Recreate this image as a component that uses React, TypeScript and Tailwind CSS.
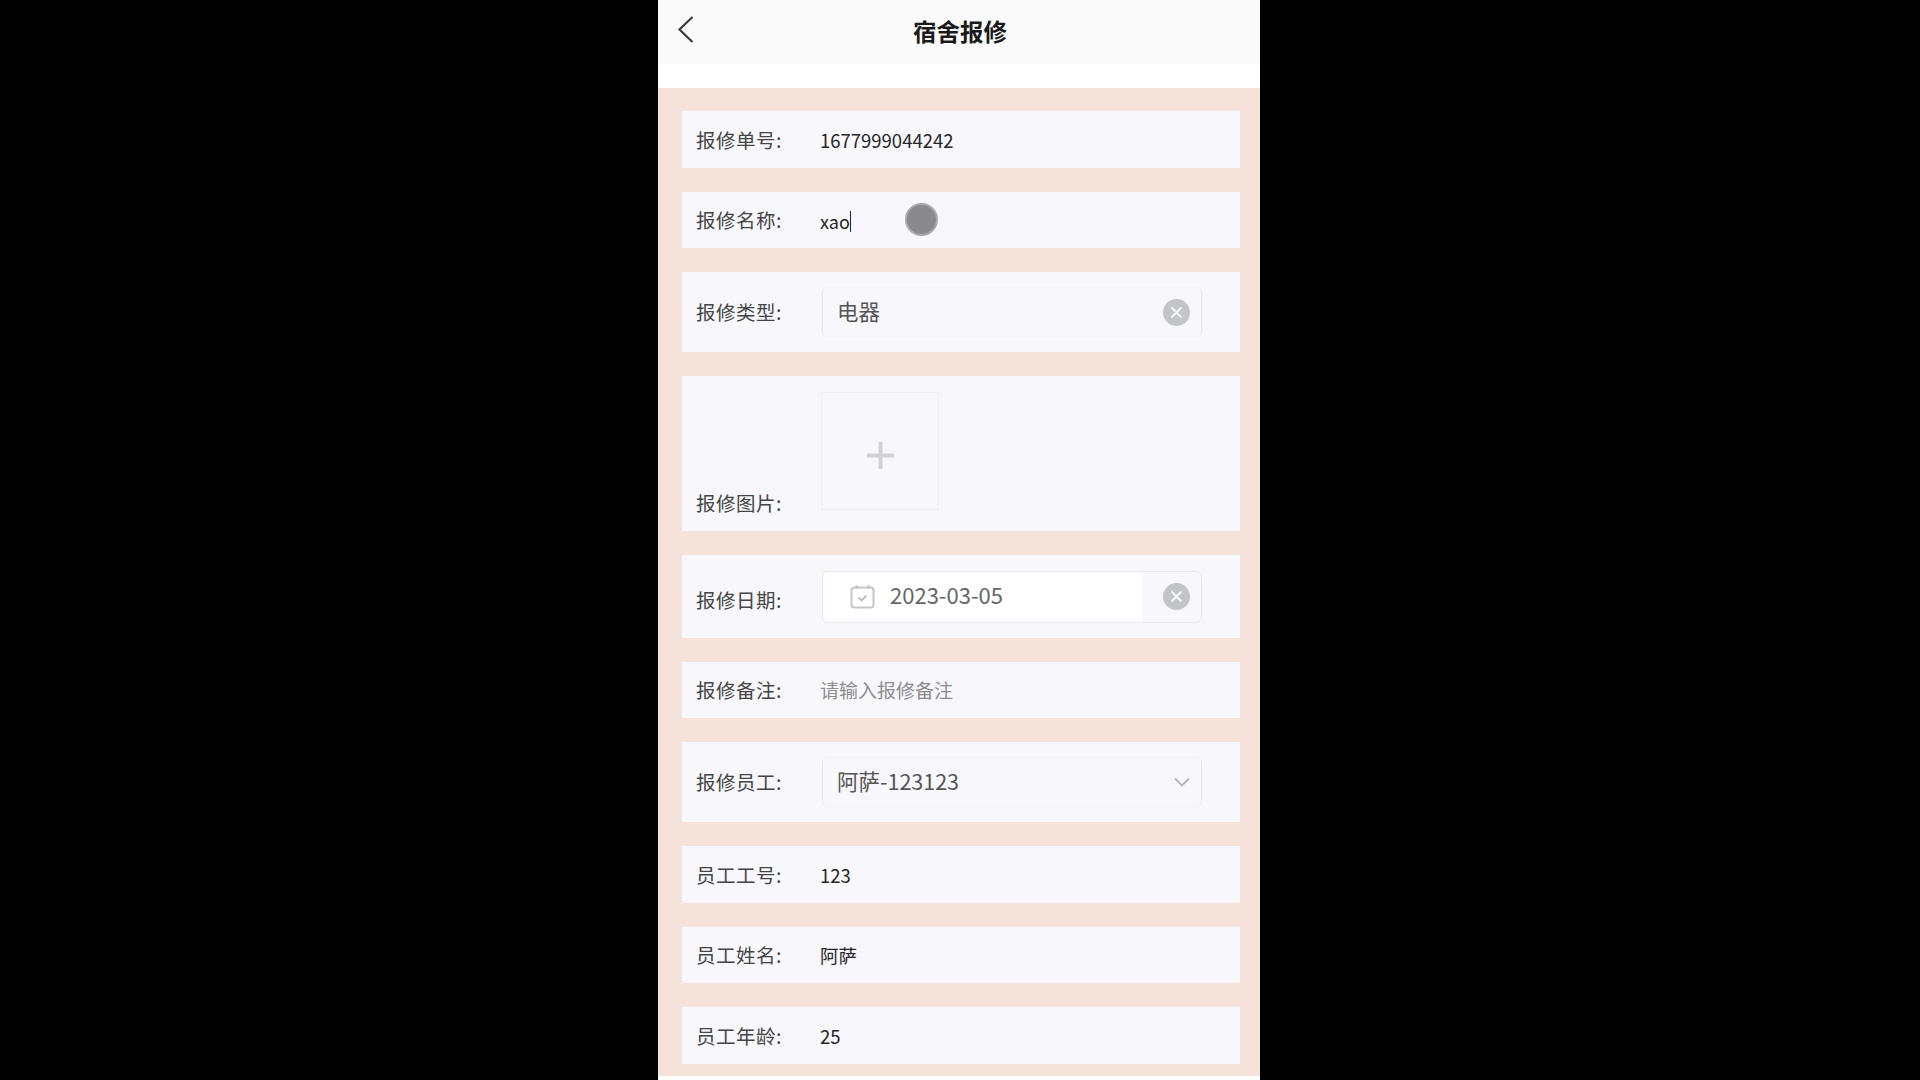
import React from "react";

const font = "[font-family:'Noto_Sans_CJK_SC','Noto_Sans',sans-serif]";

const Row: React.FC<{ label: string; h: string; children?: React.ReactNode; labelClass?: string }> = ({
  label,
  h,
  children,
  labelClass = "",
}) => {
  return (
    <div className={`flex items-center bg-[#f7f7fc] pl-[14px] ${h}`}>
      <span className={`w-[124px] shrink-0 text-[19.5px] leading-[26px] tracking-[0.5px] text-[#454545] ${labelClass}`}>
        {label}
      </span>
      {children}
    </div>
  );
};

const Value: React.FC<{ text: string }> = ({ text }) => {
  return <span className="text-[18.5px] leading-[26px] text-[#262626]">{text}</span>;
};

const ClearIcon = () => {
  return (
    <svg width="27" height="27" viewBox="0 0 27 27" className="shrink-0">
      <circle cx="13.5" cy="13.5" r="13.5" fill="#c2c4ca" />
      <path d="M9 9l9 9M18 9l-9 9" stroke="#f7f7fc" strokeWidth="2" strokeLinecap="round" />
    </svg>
  );
};

const Select: React.FC<{ text: string; children: React.ReactNode }> = ({ text, children }) => {
  return (
    <div className="ml-[2px] flex h-[50px] w-[380px] items-center justify-between rounded-md border border-x-[#e6e6ec] border-y-[#f3f3f8] pl-[14px] pr-[11px]">
      <span className="pb-[2px] text-[21.5px] text-[#555555]">{text}</span>
      {children}
    </div>
  );
};

export default function App() {
  return (
    <div className={`h-[1080px] overflow-hidden bg-black ${font}`}>
      <div className="ml-[658px] h-full w-[602px] bg-white">
        <header className="relative flex h-[64px] items-center justify-center bg-[#fafafa]">
          <svg width="18" height="27" viewBox="0 0 18 27" fill="none" className="absolute left-[19px] top-[16px]">
            <path d="M15.5 1L2.5 13.5l13 12.5" stroke="#3c3c3c" strokeWidth="2.2" />
          </svg>
          <h1 className="ml-[2px] text-[23.5px] font-bold text-[#1a1a1a]">宿舍报修</h1>
        </header>
        <main className="mt-[24px] flex h-[988px] flex-col gap-[24px] bg-[#f5e2da] pl-[24px] pr-[20px] pt-[23px]">
          <Row label="报修单号:" h="h-[57px]">
            <Value text="1677999044242" />
          </Row>
          <Row label="报修名称:" h="h-[56px] relative">
            <span className="mt-[2px] border-r border-[#222222] text-[18px] leading-[21px] text-[#262626]">xao</span>
            <span className="absolute left-[223px] top-[11px] h-[33px] w-[33px] rounded-full border-2 border-[#a9a9ad] bg-[#8a8a8e]" />
          </Row>
          <Row label="报修类型:" h="h-[80px]">
            <Select text="电器">
              <ClearIcon />
            </Select>
          </Row>
          <div className="flex h-[155px] items-start bg-[#f7f7fc] pl-[14px] pt-[16px]">
            <span className="mt-[98px] w-[125px] shrink-0 text-[19.5px] leading-[26px] tracking-[0.5px] text-[#454545]">
              报修图片:
            </span>
            <div className="flex h-[118px] w-[118px] items-center justify-center border border-[#efeff3]">
              <svg width="27" height="27" viewBox="0 0 27 27" className="mt-[8px]">
                <path d="M13.5 0v27M0 13.5h27" stroke="#d2d2d6" strokeWidth="4" />
              </svg>
            </div>
          </div>
          <Row label="报修日期:" h="h-[83px]" labelClass="mt-[7px]">
            <div className="ml-[2px] flex h-[52px] w-[380px] items-center justify-between rounded-md border border-[#e8e8ee] pr-[11px]">
              <div className="flex h-full w-[319px] items-center gap-[15px] rounded-l-md bg-white pl-[27px]">
                <svg width="25" height="25" viewBox="0 0 25 25" fill="none" stroke="#c4c6cb" strokeWidth="2">
                  <rect x="1.5" y="3.5" width="22" height="20" rx="3" />
                  <path d="M6.5 1v4M18.5 1v4" />
                  <path d="M8.5 13.5l3 3 5-5" strokeWidth="1.5" stroke="#a8aab0" />
                </svg>
                <span className="pb-[4px] text-[22px] text-[#666666]">2023-03-05</span>
              </div>
              <ClearIcon />
            </div>
          </Row>
          <Row label="报修备注:" h="h-[56px]">
            <span className="text-[19px] leading-[26px] text-[#8c8c8c]">请输入报修备注</span>
          </Row>
          <Row label="报修员工:" h="h-[80px]">
            <Select text="阿萨-123123">
              <svg width="16" height="10" viewBox="0 0 16 10" fill="none">
                <path d="M1 1.5l7 7 7-7" stroke="#b4b6bc" strokeWidth="1.8" />
              </svg>
            </Select>
          </Row>
          <Row label="员工工号:" h="h-[57px]">
            <Value text="123" />
          </Row>
          <Row label="员工姓名:" h="h-[56px]">
            <Value text="阿萨" />
          </Row>
          <Row label="员工年龄:" h="h-[57px]">
            <Value text="25" />
          </Row>
        </main>
      </div>
    </div>
  );
}
